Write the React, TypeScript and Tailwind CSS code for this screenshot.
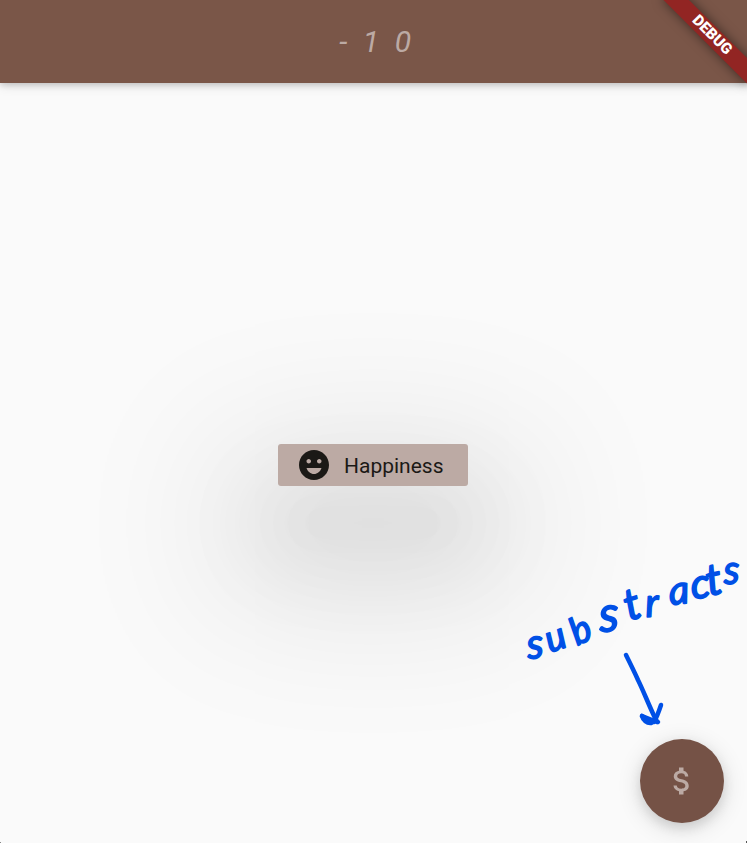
import React from "react";
import { MdAttachMoney, MdEmojiEmotions } from "react-icons/md";

function DebugBanner() {
  return (
    <div className="pointer-events-none absolute right-0 top-0 z-20 h-[130px] w-[130px] overflow-hidden">
      <div className="absolute -right-[60px] top-[41px] flex h-[18px] w-[120px] origin-[60px_-41px] rotate-45 items-center justify-center bg-[#922523] text-[15.3px] font-black leading-none text-white shadow-[0_0_12px_rgba(0,0,0,0.5)]">
        DEBUG
      </div>
    </div>
  );
}

// Handwritten note: every letter has its own position, size and tilt.
function Note() {
  return (
    <svg
      className="pointer-events-none absolute right-0 top-[540px] h-[200px] w-[232px]"
      viewBox="515 540 232 200"
      fill="none"
    >
      <text
        className="fill-[#0050e6] stroke-[#0050e6] font-['Lato',sans-serif] italic [font-variant-ligatures:none]"
        strokeWidth="1.6"
        strokeLinejoin="round"
      >
        <tspan x="528" y="659" rotate="-6" className="text-[42px]">s</tspan>
        <tspan x="550" y="653" rotate="-20" className="text-[38px]">u</tspan>
        <tspan x="577" y="646" rotate="-26" className="text-[38px]">b</tspan>
        <tspan x="600" y="632" rotate="-4" className="text-[50px]">s</tspan>
        <tspan x="629" y="621" rotate="-18" className="text-[44px]">t</tspan>
        <tspan x="646" y="617" rotate="-4" className="text-[40px]">r</tspan>
        <tspan x="670" y="605" rotate="-6" className="text-[40px]">a</tspan>
        <tspan x="692" y="599" rotate="-6" className="text-[42px]">c</tspan>
        <tspan x="709" y="596" rotate="-12" className="text-[44px]">t</tspan>
        <tspan x="724" y="584" rotate="-2" className="text-[40px]">s</tspan>
      </text>
      <g stroke="#0050e6" strokeWidth="4.5" strokeLinecap="round" strokeLinejoin="round">
        <path d="M626 655C630 663 634 671 638 680C644 692 649 706 657 722" />
        <path d="M661 705C659 711 657 717 654 722C651 721 646 719 642 716C643 720 647 723.500 651 723C654 722 655 719 658 722" />
        <path d="M642 716L652 720" />
      </g>
    </svg>
  );
}

export default function App() {
  return (
    <div className="relative flex h-[843px] w-[747px] flex-col overflow-hidden bg-[#fafafa] font-['Roboto',sans-serif]">
      <header className="z-10 flex h-[83px] shrink-0 items-center justify-center bg-[#7a5648] pl-[19px] shadow-[0_2px_6px_rgba(0,0,0,0.16),0_2px_12px_rgba(0,0,0,0.12)]">
        <h1 className="text-[30px] font-normal italic leading-none tracking-[15.600px] text-[#bcaaa4]">-10</h1>
      </header>
      <main className="flex flex-1 items-center justify-center pr-[1px] pt-[4px]">
        <button className="flex h-[42px] w-[190px] items-center rounded-[3px] bg-[#bcaaa4] pl-[18px] text-[#1b1916] shadow-[0_58px_155px_62px_rgba(0,0,0,0.09),0_58px_90px_24px_rgba(0,0,0,0.05),0_58px_40px_-14px_rgba(0,0,0,0.04)]">
          <MdEmojiEmotions className="h-9 w-9" />
          <span className="ml-3 pt-[2px] text-[21px] font-normal leading-none">Happiness</span>
        </button>
      </main>
      <button className="absolute bottom-[20px] right-[23px] flex h-[84px] w-[84px] items-center justify-center rounded-full bg-[#755246] pr-[1px] text-[#bcaaa4] shadow-[0_5px_12px_rgba(0,0,0,0.1),0_5px_24px_rgba(0,0,0,0.14)]">
        <MdAttachMoney className="h-9 w-9" />
      </button>
      <DebugBanner />
      <Note />
      <span className="absolute bottom-0 left-0 h-px w-px bg-[#888]" />
      <span className="absolute bottom-0 right-0 h-0.5 w-px bg-[#555]" />
    </div>
  );
}
